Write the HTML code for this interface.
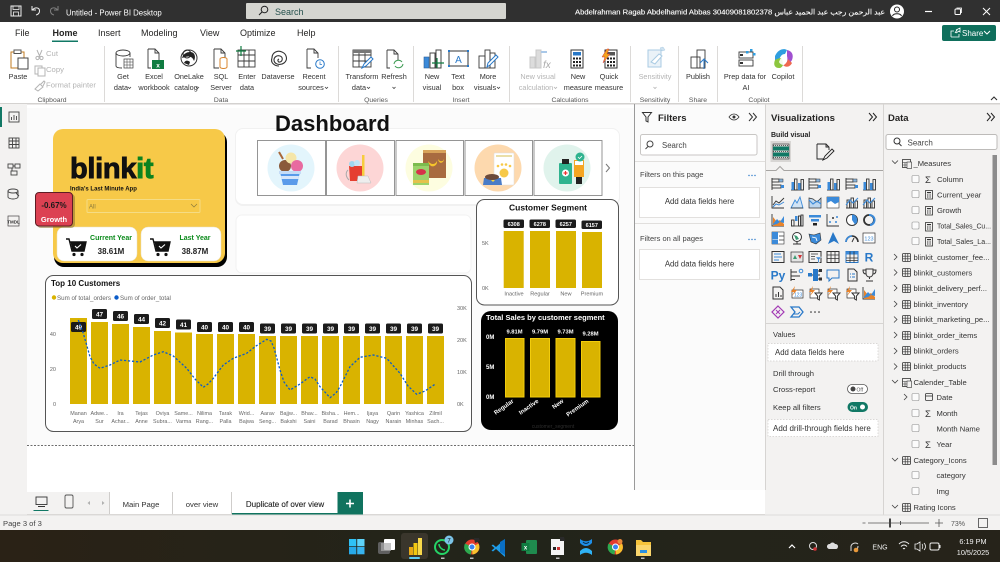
<!DOCTYPE html>
<html lang="en"><head><meta charset="utf-8"><title>Untitled - Power BI Desktop</title>
<style>
html,body{margin:0;padding:0;background:#fff;overflow:hidden;width:1000px;height:562px}
svg{display:block}
text{font-family:"Liberation Sans","Noto Sans CJK SC",sans-serif;white-space:pre}
.r{font-size:7.3px;fill:#333;text-anchor:middle}
.g{font-size:7.3px;fill:#b4b4b4;text-anchor:middle}
.gl{font-size:6.8px;fill:#555;text-anchor:middle}
.m{font-size:9px;fill:#252423}
.d{font-size:7.6px;fill:#333}
.ax{font-size:5.5px;fill:#666}
.xl{font-size:5.4px;fill:#666;text-anchor:middle}
.dl{font-size:6.4px;font-weight:bold;fill:#fff;text-anchor:middle}
.ic{fill:none;stroke:#3a3a3a;stroke-width:.9}
.ch{fill:none;stroke:#444;stroke-width:.8}
</style></head><body>
<svg width="1000" height="562" viewBox="0 0 1000 562" xmlns="http://www.w3.org/2000/svg">
<defs>
<g id="cart"><path d="M0 1h3l3 12h12l2-9H4" fill="none" stroke="#111" stroke-width="1.4"/><path d="M4.500 4h15.500l-2 9H6.500z" fill="#111"/><circle cx="8" cy="16.500" r="1.600" fill="#111"/><circle cx="16" cy="16.500" r="1.600" fill="#111"/><path d="M9 8l2 2 4-3.500" fill="none" stroke="#fff" stroke-width="1.100"/></g>
<g id="tbl"><rect x=".5" y=".5" width="8" height="8" rx="1" fill="none" stroke="#333" stroke-width=".8"/><path d="M.5 3.200h8M.5 5.800h8M3.200.5v8M5.800.5v8" stroke="#333" stroke-width=".7"/></g>
<g id="mt"><rect x=".5" y=".5" width="8" height="8" fill="none" stroke="#333" stroke-width=".8"/><path d="M.5 3.500h8M.5 6h8M3 3.500v5M6 3.500v5" stroke="#333" stroke-width=".6"/><rect x="5" y="3" width="4.500" height="6.500" fill="#f3f2f1" stroke="#333" stroke-width=".6"/></g>
<g id="calc"><rect x=".5" y=".5" width="7" height="8.500" fill="none" stroke="#333" stroke-width=".8"/><rect x="2" y="2" width="4" height="1.200" fill="#333"/><path d="M2 5h4M2 7h4" stroke="#333" stroke-dasharray="1 .6" stroke-width="1"/></g>
<rect id="cb" width="7" height="7" rx="1" fill="#fbfbfb" stroke="#8a8a8a" stroke-width=".6"/>
<g id="sig"><text x="0" y="7.500" font-size="9.500" fill="#333">Σ</text></g>
<g id="hb"><path d="M1 1v12" stroke="#333" stroke-width=".9"/><rect x="1" y="2" width="7" height="3" fill="none" stroke="#333" stroke-width=".9"/><rect x="8" y="2" width="4" height="3" fill="#8ab4dc" stroke="#333" stroke-width=".5"/><rect x="1" y="8" width="9" height="3" fill="none" stroke="#333" stroke-width=".9"/><rect x="10" y="8" width="3" height="3" fill="#3b8ad9"/></g>
<g id="vb"><path d="M1 13h12" stroke="#333" stroke-width=".9"/><rect x="1.500" y="5" width="2.500" height="8" fill="#3b8ad9"/><rect x="4.500" y="2" width="2.500" height="11" fill="none" stroke="#333" stroke-width=".9"/><rect x="8" y="6" width="2.500" height="7" fill="#3b8ad9"/><rect x="11" y="2.500" width="2.500" height="10.500" fill="none" stroke="#333" stroke-width=".9"/></g>
<g id="ln"><path d="M1 1v12h12" fill="none" stroke="#333" stroke-width=".9"/><path d="M2 10l3-4 3 2 5-5" fill="none" stroke="#333" stroke-width=".9"/><path d="M2 12l3-3 3 1 5-3" fill="none" stroke="#3b8ad9" stroke-width="1"/></g>
<g id="mn"><path d="M1 13l4-8 2 3 3-6 3 11z" fill="#d2e4f5" stroke="#3b8ad9" stroke-width=".9"/><path d="M1 13h12" stroke="#333" stroke-width=".8"/></g>
<g id="wv"><path d="M1 3v10h12v-10l-4 4-4-3z" fill="#bcd6ef" stroke="#333" stroke-width=".7"/><path d="M1 5l4 4 4-3 4 3" fill="none" stroke="#3b8ad9" stroke-width="1.100"/></g>
<g id="wv2"><rect x="1" y="2" width="12" height="11" fill="#fff" stroke="#333" stroke-width=".6"/><path d="M1 2h12v5l-4 2-4-3-4 2z" fill="#3b8ad9"/></g>
<g id="cb1"><path d="M1 13h12" stroke="#333" stroke-width=".9"/><rect x="2" y="5" width="2.500" height="8" fill="none" stroke="#333" stroke-width=".9"/><rect x="6" y="3" width="2.500" height="10" fill="none" stroke="#333" stroke-width=".9"/><rect x="10" y="6" width="2.500" height="7" fill="none" stroke="#333" stroke-width=".9"/><path d="M1 10l4-5 3 3 5-5" fill="none" stroke="#3b8ad9" stroke-width="1.100"/></g>
<g id="rb"><path d="M1 1v12h12" fill="none" stroke="#333" stroke-width=".9"/><path d="M2 4l4 5 3-2 4 4v2h-11z" fill="#e8832a"/><path d="M2 11l4-5 3 3 4-6v7l-4-1-3 2-4 1z" fill="#3b8ad9"/></g>
<g id="wf"><path d="M1 13h12" stroke="#333" stroke-width=".8"/><rect x="1.500" y="7" width="2.500" height="6" fill="none" stroke="#333" stroke-width=".9"/><rect x="5" y="3" width="2.500" height="5" fill="#3b8ad9"/><rect x="8.500" y="3" width="2" height="10" fill="none" stroke="#333" stroke-width=".9"/><rect x="11" y="2" width="2" height="11" fill="none" stroke="#333" stroke-width=".9"/></g>
<g id="fn"><rect x="1" y="2" width="12" height="2.500" fill="#3b8ad9"/><rect x="3" y="6" width="8" height="2.500" fill="#3b8ad9"/><rect x="5" y="10" width="4" height="2.500" fill="#222"/></g>
<g id="sc"><path d="M1 1v12h12" fill="none" stroke="#333" stroke-width=".9"/><circle cx="4" cy="9" r="1" fill="#3b8ad9"/><circle cx="7" cy="5" r="1" fill="#333"/><circle cx="10" cy="9" r="1" fill="#3b8ad9"/><circle cx="11" cy="4" r="1" fill="#3b8ad9"/></g>
<g id="pi"><circle cx="7" cy="7" r="5.500" fill="#fff" stroke="#333"/><path d="M7 7V1.500a5.500 5.500 0 0 1 3 10z" fill="#3b8ad9"/></g>
<g id="dn"><circle cx="7" cy="7" r="5" fill="none" stroke="#333" stroke-width="1.800"/><path d="M7 2a5 5 0 0 1 1 10" fill="none" stroke="#3b8ad9" stroke-width="2"/></g>
<g id="tm"><rect x="1" y="1" width="12" height="12" fill="#fff" stroke="#333" stroke-width=".6"/><rect x="1" y="1" width="6" height="7" fill="#3b8ad9"/><rect x="1" y="8.500" width="6" height="4.500" fill="#3b8ad9"/><path d="M8 5h5M8 9h5" stroke="#333" stroke-width=".7"/></g>
<g id="gl"><circle cx="7" cy="6" r="4.500" fill="#fff" stroke="#333"/><path d="M4 4l3 1 2 3-3 1z" fill="#3c9a72"/><path d="M3 13h8M7 10.500V13" stroke="#333"/></g>
<g id="fm"><path d="M1 3l5 1 6-2 1 7-5 4-5-2z" fill="#3b8ad9" stroke="#333" stroke-width=".6"/><path d="M4 6l4 1 1 3" stroke="#fff" fill="none" stroke-width=".9"/></g>
<g id="az"><path d="M7 1l6 12-5-3-6 3z" fill="#2878c8"/></g>
<g id="gg"><path d="M1 11a6 6 0 0 1 12 0" fill="none" stroke="#333" stroke-width="1.600"/><path d="M1 11a6 6 0 0 1 6-6" fill="none" stroke="#3b8ad9" stroke-width="1.600"/><path d="M7 11l2-4" stroke="#333"/></g>
<g id="kd"><rect x="1" y="2" width="12" height="10" fill="#fff" stroke="#333" stroke-width=".7"/><text x="7" y="9.500" font-size="5.500" fill="#3b8ad9" text-anchor="middle">123</text></g>
<g id="mr"><rect x="1" y="1.500" width="12" height="11" fill="none" stroke="#333"/><path d="M3 4h7M3 7h8M3 10h5" stroke="#3b8ad9"/></g>
<g id="kp"><rect x="1" y="2" width="12" height="10" fill="#e4e4e4" stroke="#333" stroke-width=".7"/><path d="M3 9l2-4 2 4z" fill="#3c9a72"/><path d="M8 5l2 4 2-4z" fill="#d13438"/></g>
<g id="sl"><rect x="1" y="1.500" width="12" height="11" fill="none" stroke="#333"/><path d="M3 4h7M3 6.500h4M3 9h4" stroke="#333" stroke-width=".8"/><path d="M7.500 7h6l-2.300 2.500v3.500l-1.400-1v-2.500z" fill="#3b8ad9" stroke="#f3f2f1" stroke-width=".5"/></g>
<g id="tt"><rect x="1" y="1.500" width="12" height="11" fill="none" stroke="#333"/><path d="M1 5h12M1 8.500h12M5 1.500v11M9 1.500v11" stroke="#333" stroke-width=".8"/></g>
<g id="mx"><rect x="1" y="1.500" width="12" height="11" fill="none" stroke="#2878c8"/><rect x="1" y="1.500" width="12" height="3" fill="#3b8ad9"/><path d="M1 8h12M1 10.500h12M5 1.500v11M9 1.500v11" stroke="#333" stroke-width=".8"/></g>
<g id="rr"><text x="7" y="11.500" font-size="12" font-weight="bold" fill="#2878c8" text-anchor="middle">R</text></g>
<g id="py"><text x="7" y="11.500" font-size="12" font-weight="bold" fill="#2878c8" text-anchor="middle">Py</text></g>
<g id="de"><path d="M1 1v12M1 4h6M1 8h9M1 11.500h4" stroke="#333" stroke-width="1"/><circle cx="11" cy="3" r="1.800" fill="none" stroke="#3b8ad9"/></g>
<g id="dt"><rect x="5" y="1" width="5" height="12" fill="#2878c8"/><rect x="0" y="5" width="4" height="3.500" fill="#2878c8"/><path d="M4 7h1M10 3h2M10 11h2M10 7h2" stroke="#333"/><rect x="11" y="1" width="3" height="3" fill="#333"/><rect x="11" y="9.500" width="3" height="3" fill="#333"/></g>
<g id="sp"><path d="M1 2h12v8H6l-3 3v-3H1z" fill="none" stroke="#2878c8" stroke-width="1"/></g>
<g id="pg"><path d="M3 1h6l3 3v9H3z" fill="none" stroke="#333"/><path d="M5 6h1M7 6h3M5 9h1M7 9h3" stroke="#2878c8"/></g>
<g id="tp"><path d="M4 1h7v4c0 3-2 4-3.500 4S4 8 4 5zM4 2H1c0 3 1 4 3 4M11 2h3c0 3-1 4-3 4M7.500 9v2M4 13h7" fill="none" stroke="#333" stroke-width="1"/></g>
<g id="dc"><path d="M2 1h7l3 3v9H2z" fill="none" stroke="#333"/><path d="M5 11V8M7.500 11V6M10 11V9" stroke="#333"/></g>
<g id="spk"><path d="M2 4h11v8H2z" fill="#fff" stroke="#333" stroke-width=".7"/><path d="M5 0L1 6h3l-2 4 5-6H4z" fill="#e8832a"/><text x="8" y="10.500" font-size="5" fill="#3b8ad9" text-anchor="middle">123</text></g>
<g id="spf"><path d="M2 3h9v9H2z" fill="#fff" stroke="#333" stroke-width=".7"/><path d="M5 0L1 6h3l-2 4 5-6H4z" fill="#e8832a"/><path d="M7 7h7l-2.600 3v4l-1.800-1v-3z" fill="#fff" stroke="#333"/></g>
<g id="pur"><path d="M7 1l6 6-6 6-6-6z" fill="none" stroke="#a238b4" stroke-width="1.200"/><path d="M5 5l4 4M9 5l-4 4" stroke="#a238b4"/></g>
<g id="chv"><path d="M1 2h8l4 5-4 5H1l4-5z" fill="none" stroke="#2878c8" stroke-width="1.300"/><path d="M3 9h5l2-2" stroke="#2878c8" fill="none"/></g>
<g id="dots"><circle cx="3" cy="7" r=".8" fill="#222"/><circle cx="7" cy="7" r=".8" fill="#222"/><circle cx="11" cy="7" r=".8" fill="#222"/></g>
<linearGradient id="tb" x1="0" x2="1"><stop offset="0" stop-color="#2a2216"/><stop offset=".5" stop-color="#22241a"/><stop offset="1" stop-color="#26231a"/></linearGradient>
</defs>

<!-- base -->
<rect width="1000" height="562" fill="#f3f2f1"/>
<!-- title bar -->
<rect width="1000" height="22" fill="#303030"/>
<rect x="11" y="6" width="10" height="10" fill="none" stroke="#f0f0f0"/><rect x="13" y="6" width="6" height="3.500" fill="none" stroke="#f0f0f0" stroke-width=".8"/><rect x="13.500" y="12" width="5" height="4" fill="none" stroke="#f0f0f0" stroke-width=".8"/>
<path d="M32 6v4h4M32.500 10c2-3 7-3 7 1 0 2-1.500 3.500-3.500 4" fill="none" stroke="#f0f0f0"/>
<path d="M58 6v4h-4M57.500 10c-2-3-7-3-7 1 0 2 1.500 3.500 3.500 4" fill="none" stroke="#7f7f7f"/>
<text x="66" y="15.500" font-size="7.800" fill="#fff">Untitled - Power BI Desktop</text>
<rect x="246" y="3" width="260" height="16" rx="1" fill="#d5d5d0"/>
<circle cx="264.500" cy="9.500" r="3.300" fill="none" stroke="#222" stroke-width="1"/><path d="M262 12l-3 3" stroke="#222" stroke-width="1.100"/>
<text x="275" y="15" font-size="9" fill="#27524e">Search</text>
<text x="575" y="14.500" font-size="7.300" fill="#fff" stroke="#fff" stroke-width=".12" textLength="310" lengthAdjust="spacingAndGlyphs">Abdelrahman Ragab Abdelhamid Abbas 30409081802378 عبد الرحمن رجب عبد الحميد عباس</text>
<circle cx="897" cy="11.500" r="7" fill="#fff"/><circle cx="897" cy="9.500" r="2.500" fill="none" stroke="#222"/><path d="M892.500 16c1-3 8-3 9 0" fill="none" stroke="#222"/>
<path d="M925 11.500h7" stroke="#fff" stroke-width="1.200"/>
<rect x="955" y="9" width="5.500" height="5.500" rx="1" fill="none" stroke="#fff"/><path d="M956.500 8h5v5" fill="none" stroke="#fff" stroke-width=".8"/>
<path d="M983 8l7 7M990 8l-7 7" stroke="#fff" stroke-width="1"/>

<!-- ribbon -->
<rect y="22" width="1000" height="82" fill="#fff"/>
<rect y="103" width="1000" height="1.500" fill="#d4d2d0"/>
<text x="15" y="36" class="m">File</text>
<text x="52.500" y="36" class="m" font-weight="bold">Home</text>
<rect x="52" y="40.500" width="26" height="1.500" fill="#117865"/>
<text x="98" y="36" class="m">Insert</text>
<text x="141" y="36" class="m">Modeling</text>
<text x="200" y="36" class="m">View</text>
<text x="240" y="36" class="m">Optimize</text>
<text x="297" y="36" class="m">Help</text>
<rect x="942" y="25" width="54" height="16" rx="2" fill="#0f6f5c"/>
<path d="M951 37h8v-3M951 37v-6h3M955 33l2-3h-1l4-2 0 4-1-1-3 2" fill="none" stroke="#fff" stroke-width=".8"/>
<text x="962" y="36" font-size="8" fill="#fff">Share</text>
<path d="M984 31l3 3 3-3" fill="none" stroke="#fff"/>
<path d="M991 100l3-3 3 3" fill="none" stroke="#333" stroke-width="1.100"/>
<!-- separators -->
<g stroke="#dcdad8"><path d="M104.500 46v56M338.500 46v56M413.500 46v56M509.500 46v56M630.500 46v56M678.500 46v56M717.500 46v56M802.500 46v56"/></g>
<!-- ribbon icons -->
<rect x="11" y="52" width="13" height="16" fill="#fff" stroke="#c27b20"/><rect x="14" y="50" width="7" height="3.500" fill="#fff" stroke="#555"/><rect x="18" y="58" width="10" height="11" fill="#fff" stroke="#444"/>
<path d="M37 50l3 7M42 50l-3 7" stroke="#b4b4b4"/><circle cx="37.500" cy="58" r="1.600" fill="none" stroke="#b4b4b4"/><circle cx="41.500" cy="58" r="1.600" fill="none" stroke="#b4b4b4"/>
<rect x="35" y="66" width="7" height="8" fill="none" stroke="#b4b4b4"/><rect x="38" y="68" width="7" height="8" fill="#fff" stroke="#b4b4b4"/>
<path d="M35 89l5-5 3 3-5 4zM41 84l3-3 1 1-2 4" fill="none" stroke="#b4b4b4"/>
<g class="ic"><path d="M116 53v13c0 1.500 3 2 6 2M130 53v4"/><ellipse cx="123" cy="53" rx="7" ry="3"/><rect x="124" y="59" width="9" height="9" stroke-width=".7"/><path d="M124 62h9M124 65h9M127 59v9M130 59v9" stroke-width=".5"/></g>
<g class="ic"><path d="M148 49h7l4 4v7M148 49v19h3"/><path d="M155 49v4h4"/></g><rect x="152" y="60" width="12" height="9" fill="#107c41"/><text x="158" y="67.500" font-size="6.500" font-weight="bold" fill="#fff" text-anchor="middle">x</text>
<circle cx="189" cy="58" r="8" fill="#fff" stroke="#333"/><path d="M182 58a8 8 0 0 1 8-6c5 0 6 5 4 9-2-6-7-5-12-3zM184 63c1-3 4-3 6-1l-1 3z" fill="#222"/><circle cx="187" cy="54" r="4" fill="none" stroke="#222"/>
<g class="ic"><path d="M214 49h7l4 4v7M214 49v19h5"/><path d="M221 49v4h4"/></g><path d="M220 59a3.500 1.500 0 0 1 7 0v8a3.500 1.500 0 0 1-7 0z" fill="#fff" stroke="#d8842c"/>
<g class="ic"><rect x="238" y="50" width="17" height="17"/><path d="M238 55h17M238 61h17M244 50v17M249 50v17"/></g><path d="M241 46v10M236 51h10" stroke="#107c41" stroke-width="1.200"/>
<g fill="none" stroke="#333" stroke-width="1.100"><path d="M272 58c0-6 6-8 10-6 5 2 6 8 2 11-4 3-10 1-10-3 0-3 3-5 6-4 3 1 3 5 0 6-2 .5-3-2-1-3"/><path d="M272 58c-2 5 3 8 7 8"/></g>
<g class="ic"><path d="M307 49h7l4 4v5M307 49v19h4"/><path d="M314 49v4h4"/></g><circle cx="320" cy="64" r="4.300" fill="#fff" stroke="#2878c8"/><path d="M320 61.500v3h2" fill="none" stroke="#2878c8" stroke-width=".7"/>
<g class="ic"><rect x="353" y="50" width="18" height="17"/><path d="M353 55h18M353 61h18M359 50v17M365 50v17"/></g><rect x="353" y="50" width="18" height="3" fill="#777"/><path d="M362 68l2-4 7-7 2 2-7 7z" fill="#fff" stroke="#2878c8"/>
<g class="ic"><path d="M387 50h7l4 4v6M387 50v18h3"/><path d="M394 50v4h4"/></g><path d="M394 64a4.500 4.500 0 0 1 8-2M403 64a4.500 4.500 0 0 1-8 2" fill="none" stroke="#3c9a52"/>
<rect x="424" y="57" width="5" height="11" fill="#3b8ad9" stroke="#2a5f9a" stroke-width=".6"/><rect x="430" y="53" width="5" height="15" fill="#fff" stroke="#444"/><rect x="436" y="50" width="5" height="18" fill="#fff" stroke="#444"/><path d="M437 58v10M432 63h12" stroke="#107c41" stroke-width="1.200"/>
<rect x="449" y="51" width="19" height="15" fill="#fff" stroke="#333"/><g fill="#2878c8"><rect x="448" y="50" width="2" height="2"/><rect x="467" y="50" width="2" height="2"/><rect x="448" y="65" width="2" height="2"/><rect x="467" y="65" width="2" height="2"/></g><text x="458.500" y="63" font-size="10" fill="#2878c8" text-anchor="middle">A</text>
<g class="ic"><rect x="479" y="56" width="6" height="12"/><rect x="485" y="50" width="5" height="18"/><rect x="490" y="53" width="5" height="15"/></g><path d="M487 67l1-4 8-8 2 2-8 8z" fill="#fff" stroke="#2878c8"/>
<g stroke="#c8c8c8" fill="#dcdcdc"><rect x="530" y="57" width="5" height="11"/><rect x="536" y="50" width="5" height="18"/></g><path d="M541 52h6" stroke="#a9c8e8" stroke-width="2"/><text x="543" y="68" font-size="10" font-style="italic" fill="#aaa" font-family="Liberation Serif">fx</text>
<rect x="571" y="50" width="12" height="18" fill="none" stroke="#333"/><rect x="573" y="52" width="8" height="3.500" fill="#2878c8"/><g fill="#222"><rect x="573" y="57.500" width="2" height="2"/><rect x="576" y="57.500" width="2" height="2"/><rect x="579" y="57.500" width="2" height="2"/><rect x="573" y="61" width="2" height="2"/><rect x="576" y="61" width="2" height="2"/><rect x="579" y="61" width="2" height="2"/><rect x="573" y="64.500" width="2" height="2"/><rect x="576" y="64.500" width="2" height="2"/><rect x="579" y="64.500" width="2" height="2"/></g>
<rect x="605" y="50" width="12" height="18" fill="none" stroke="#333"/><rect x="607" y="52" width="8" height="3.500" fill="#555"/><g fill="#222"><rect x="607" y="57.500" width="2" height="2"/><rect x="610" y="57.500" width="2" height="2"/><rect x="613" y="57.500" width="2" height="2"/><rect x="607" y="61" width="2" height="2"/><rect x="610" y="61" width="2" height="2"/><rect x="613" y="61" width="2" height="2"/><rect x="607" y="64.500" width="2" height="2"/><rect x="610" y="64.500" width="2" height="2"/><rect x="613" y="64.500" width="2" height="2"/></g><path d="M607 49l-5 8h3l-2 6 7-9h-3l2-5z" fill="#f2a41d" stroke="#d13438" stroke-width=".5"/>
<rect x="648" y="50" width="13" height="17" fill="#eaf2f8" stroke="#a9cbe3"/><path d="M651 62l8-8 3 2-7 8z" fill="#fff" stroke="#a9cbe3"/><path d="M660 48l3-1 2 3-3 1z" fill="#cfe2f0" stroke="#a9cbe3" stroke-width=".5"/>
<g class="ic"><rect x="691" y="57" width="9" height="11"/><rect x="697" y="50" width="8" height="18"/></g><path d="M704 69v-9M700 63l4-4 4 4" fill="none" stroke="#2878c8"/>
<g class="ic"><rect x="739" y="52" width="14" height="6"/><rect x="739" y="60" width="14" height="6"/></g><rect x="740" y="54" width="3" height="2" fill="#333"/><rect x="740" y="62" width="3" height="2" fill="#333"/><g fill="#2f9ee0"><rect x="746" y="51" width="2.500" height="2.500"/><rect x="750" y="49" width="2.500" height="2.500"/><rect x="753" y="53" width="2.500" height="2.500"/></g>
<path d="M775 56c3-7 9-8 12-6l-2 4c-3 0-5 2-6 7-1 3-4 4-4 1z" fill="#2f9ee0"/><path d="M787 50c5 1 7 5 5 10l-4 6-4-1c3-1 4-5 3-9z" fill="#a04fd0"/><path d="M775 60c-2 5 0 8 4 8 2 0 3-1 4-3 0-4-1-5-1-7-3 0-5 1-7 2z" fill="#8dc63f"/><path d="M783 65c3 3 7 2 9-2l-4-4c-1 3-2 5-5 6z" fill="#ef6950"/><path d="M779 62c1-3 3-6 7-8 2 4 1 8-2 11-2 0-4-1-5-3z" fill="#fff" opacity=".9"/>
<!-- ribbon text -->
<text x="18" y="79" class="r">Paste</text>
<text x="46" y="56" class="g" style="text-anchor:start;font-size:7.700px">Cut</text><text x="46" y="72" class="g" style="text-anchor:start;font-size:7.700px">Copy</text><text x="46" y="87.500" class="g" style="text-anchor:start;font-size:7.700px">Format painter</text>
<text x="52" y="102" class="gl">Clipboard</text>
<text x="123" y="79" class="r">Get</text><text x="121" y="90" class="r">data</text>
<text x="154" y="79" class="r">Excel</text><text x="154" y="90" class="r">workbook</text>
<text x="189" y="79" class="r">OneLake</text><text x="186" y="90" class="r">catalog</text>
<text x="221" y="79" class="r">SQL</text><text x="221" y="90" class="r">Server</text>
<text x="247" y="79" class="r">Enter</text><text x="247" y="90" class="r">data</text>
<text x="278" y="79" class="r">Dataverse</text>
<text x="314" y="79" class="r">Recent</text><text x="311" y="90" class="r">sources</text>
<text x="221" y="102" class="gl">Data</text>
<text x="362" y="79" class="r">Transform</text><text x="359" y="90" class="r">data</text>
<text x="394" y="79" class="r">Refresh</text>
<text x="376" y="102" class="gl">Queries</text>
<text x="432" y="79" class="r">New</text><text x="432" y="90" class="r">visual</text>
<text x="458" y="79" class="r">Text</text><text x="458" y="90" class="r">box</text>
<text x="488" y="79" class="r">More</text><text x="485" y="90" class="r">visuals</text>
<text x="461" y="102" class="gl">Insert</text>
<text x="538" y="79" class="g">New visual</text><text x="536" y="90" class="g">calculation</text>
<text x="578" y="79" class="r">New</text><text x="578" y="90" class="r">measure</text>
<text x="609" y="79" class="r">Quick</text><text x="609" y="90" class="r">measure</text>
<text x="570" y="102" class="gl">Calculations</text>
<text x="655" y="79" class="g">Sensitivity</text>
<text x="655" y="102" class="gl">Sensitivity</text>
<text x="698" y="79" class="r">Publish</text><text x="698" y="102" class="gl">Share</text>
<text x="745" y="79" class="r">Prep data for</text><text x="746" y="90" class="r">AI</text>
<text x="783" y="79" class="r">Copilot</text><text x="759" y="102" class="gl">Copilot</text>
<g class="ch" stroke="#444"><path d="M128 87l1.500 1.500 1.500-1.500M196 87l1.500 1.500 1.500-1.500M325 87l1.500 1.500 1.500-1.500M367 87l1.500 1.500 1.500-1.500M392.500 87l1.500 1.500 1.500-1.500M497 87l1.500 1.500 1.500-1.500"/></g>
<path d="M554 87l1.500 1.500 1.500-1.500M653.500 87l1.500 1.500 1.500-1.500" class="ch" style="stroke:#b4b4b4"/>

<!-- left rail -->
<rect y="104" width="27" height="426" fill="#f3f2f1"/>
<rect x="0" y="107" width="2" height="20" fill="#117865"/>
<g fill="none" stroke="#444" stroke-width=".9">
<rect x="9" y="112" width="10" height="10"/><path d="M11.500 120v-3M14 120v-5M16.500 120v-4"/>
<rect x="9" y="138" width="10" height="10"/><path d="M9 141h10M9 144.500h10M12.500 138v10M16 138v10"/>
<rect x="8" y="164" width="5" height="4"/><rect x="15" y="164" width="5" height="4"/><rect x="11" y="171" width="6" height="4"/><path d="M13 166h2M12 168v3"/>
<ellipse cx="13" cy="191" rx="5" ry="2"/><path d="M8 191v6c0 1 2.500 2 5 2s5-1 5-2v-6"/>
</g>
<path d="M16 193l3 3" stroke="#444"/>
<rect x="8" y="216" width="11" height="10" fill="none" stroke="#444" stroke-width=".7"/>
<text x="13.500" y="223.500" font-size="4.500" fill="#333" text-anchor="middle" font-weight="bold">TMDL</text>

<!-- canvas -->
<rect x="27" y="104.500" width="607" height="388" fill="#fff"/>
<rect x="27" y="108" width="607" height="337" fill="#fbfbfb"/>
<path d="M27 445.500h607" stroke="#6d6d6d" stroke-width="1" stroke-dasharray="2 1.500"/>

<!-- slicer panel -->
<rect x="235" y="128" width="385" height="78" rx="8" fill="#f1f1f1"/>
<rect x="236" y="129" width="383" height="75" rx="7" fill="#fff"/>
<rect x="236" y="215" width="235" height="58" rx="6" fill="#fff" stroke="#f2f2f2"/>
<text x="275" y="131" font-size="22" font-weight="bold" fill="#111" textLength="115" lengthAdjust="spacingAndGlyphs">Dashboard</text>
<g fill="#fff" stroke="#8a8a8a" stroke-width=".9">
<rect x="257.500" y="140.500" width="68" height="55"/><rect x="326.500" y="140.500" width="68" height="55"/><rect x="396" y="140.500" width="67.500" height="55"/><rect x="465" y="140.500" width="67.500" height="55"/><rect x="534" y="140.500" width="68" height="55"/></g>
<circle cx="291" cy="168" r="23.500" fill="#e3f5fc"/><circle cx="360" cy="168" r="23.500" fill="#fdd6d6"/><circle cx="429" cy="168" r="23.500" fill="#fdfde0"/><circle cx="498" cy="168" r="23.500" fill="#fdd9ae"/><circle cx="567" cy="168" r="23.500" fill="#e0f3ec"/>
<!-- ice cream -->
<path d="M280 172h20l-3 13h-14z" fill="#5a9bea"/><path d="M281 176h18l-.5 3h-17z" fill="#d7e6fa"/><circle cx="285" cy="166" r="6" fill="#8a5a3a"/><circle cx="291" cy="158" r="5.500" fill="#f5e6a8"/><circle cx="297" cy="166" r="6" fill="#e86aa0"/><path d="M279 152l4 7" stroke="#a8683a" stroke-width="2"/><rect x="279" y="171" width="22" height="3" fill="#c5dcf7"/>
<!-- mop -->
<path d="M349 166h14l-1 15h-12z" fill="#e53f30"/><rect x="362" y="155" width="2.500" height="21" fill="#f7cd3c"/><path d="M358 176h10l3 7h-14z" fill="#eee" stroke="#bbb" stroke-width=".5"/><circle cx="352" cy="164" r="3" fill="#9fd7ef"/><circle cx="357" cy="163" r="3" fill="#bfe5f5"/><path d="M348 170c-3 3-2 7 1 10" fill="none" stroke="#aaa"/>
<!-- snack -->
<rect x="423" y="152" width="23" height="26" fill="#a86b40"/><rect x="423" y="150" width="23" height="3" fill="#d8a35a"/><path d="M428 161c3 4 7 4 9 0 1 5-7 9-9 0zM438 159c2 3 5 3 6 0 0 4-5 6-6 0z" fill="#f6c42b"/><rect x="413" y="165" width="16" height="20" fill="#9bd36c"/><rect x="413" y="163" width="16" height="3" fill="#7cbc4f"/><ellipse cx="421" cy="172" rx="5" ry="3" fill="#d6334a"/><rect x="413" y="180" width="16" height="3" fill="#e4c24c"/>
<!-- pet -->
<rect x="494" y="153" width="20" height="32" rx="1" fill="#fff" stroke="#ddd" stroke-width=".5"/><rect x="496" y="155" width="16" height="2" fill="#eadfa8"/><circle cx="504" cy="173" r="4.500" fill="#f7c948"/><circle cx="498" cy="166" r="1.300" fill="#f7c948"/><circle cx="502" cy="164.500" r="1.300" fill="#f7c948"/><circle cx="506" cy="164.500" r="1.300" fill="#f7c948"/><circle cx="510" cy="166" r="1.300" fill="#f7c948"/><path d="M484 178h17l1 7h-19z" fill="#4a7cc7"/><ellipse cx="492" cy="177" rx="7" ry="3" fill="#6d4a3a"/><path d="M491 180l2 2 2-2z" fill="#f7d33c"/>
<!-- health -->
<rect x="559" y="163" width="13" height="21" rx="1" fill="#2fb38f"/><rect x="562" y="159" width="7" height="5" fill="#222"/><circle cx="565.500" cy="173" r="3.500" fill="#fff"/><path d="M565.500 171v4M563.500 173h4" stroke="#e33" stroke-width="1.200"/><rect x="574" y="160" width="10" height="17" fill="#f5a623"/><rect x="575" y="161" width="8" height="4" fill="#fff"/><rect x="576" y="177" width="6" height="7" fill="#222"/><circle cx="580" cy="157" r="4.500" fill="#2fb38f"/><path d="M578 157l1.500 1.500 2.500-2.500" stroke="#fff" fill="none" stroke-width=".8"/>
<path d="M606 164l3.500 4-3.500 4" fill="none" stroke="#777"/>

<!-- blinkit card -->
<rect x="54" y="132" width="173" height="135" rx="10" fill="#000"/>
<rect x="53" y="129" width="172" height="134" rx="10" fill="#f7c948"/>
<text x="70" y="178" font-size="29" font-weight="bold" letter-spacing="-.3" fill="#111" stroke="#111" stroke-width=".9">blink<tspan fill="#0c831f" stroke="#0c831f">it</tspan></text>
<text x="70" y="190.500" font-size="6" font-weight="bold" fill="#111">India's Last Minute App</text>
<rect x="87" y="199.500" width="113" height="13" rx="1" fill="#f7c948" stroke="#f5dc84"/>
<text x="89" y="208.500" font-size="6" fill="#8a7a3c">All</text>
<path d="M191 204l3 3 3-3" fill="none" stroke="#8a7a3c" stroke-width=".7"/>
<rect x="57" y="227" width="80" height="34" rx="7" fill="#fff" stroke="#e7e0c6" stroke-width=".5"/>
<rect x="141" y="227" width="80" height="34" rx="7" fill="#fff" stroke="#e7e0c6" stroke-width=".5"/>
<use href="#cart" x="66" y="238"/><use href="#cart" x="150" y="238"/>
<text x="111" y="240" font-size="7" font-weight="bold" fill="#0a8a1a" text-anchor="middle">Current Year</text>
<text x="111" y="254" font-size="8" font-weight="bold" fill="#222" text-anchor="middle">38.61M</text>
<text x="195" y="240" font-size="7" font-weight="bold" fill="#0a8a1a" text-anchor="middle">Last Year</text>
<text x="195" y="254" font-size="8" font-weight="bold" fill="#222" text-anchor="middle">38.87M</text>
<rect x="37" y="194" width="38" height="34" rx="4" fill="#8a7130" opacity=".55"/>
<rect x="35.500" y="192.500" width="37" height="33.500" rx="3.500" fill="#dc4152" stroke="#5e1c24"/>
<text x="54" y="208" font-size="8" font-weight="bold" fill="#1a1a1a" text-anchor="middle">-0.67%</text>
<text x="54" y="222" font-size="7.500" font-weight="bold" fill="#fff" text-anchor="middle">Growth</text>

<!-- Top 10 -->
<rect x="45.500" y="275.500" width="426" height="156" rx="8" fill="#fff" stroke="#555"/>
<text x="51" y="286" font-size="8" font-weight="bold" fill="#111">Top 10 Customers</text>
<circle cx="54" cy="297.500" r="2.200" fill="#d9b300"/><text x="57" y="300" font-size="6.200" fill="#666">Sum of total_orders</text>
<circle cx="116.500" cy="297.500" r="2.200" fill="#0b5cc9"/><text x="120" y="300" font-size="6.200" fill="#666">Sum of order_total</text>
<g fill="#d9b300">
<rect x="70" y="318" width="17" height="86"/><rect x="91" y="322" width="17" height="82"/><rect x="112" y="324" width="17" height="80"/><rect x="133" y="327" width="17" height="77"/><rect x="154" y="331" width="17" height="73"/><rect x="175" y="332.500" width="17" height="71.500"/><rect x="196" y="334" width="17" height="70"/><rect x="217" y="334" width="17" height="70"/><rect x="238" y="334" width="17" height="70"/><rect x="259" y="336" width="17" height="68"/><rect x="280" y="336" width="17" height="68"/><rect x="301" y="336" width="17" height="68"/><rect x="322" y="336" width="17" height="68"/><rect x="343" y="336" width="17" height="68"/><rect x="364" y="336" width="17" height="68"/><rect x="385" y="336" width="17" height="68"/><rect x="406" y="336" width="17" height="68"/><rect x="427" y="336" width="17" height="68"/>
</g>
<g fill="#1b1b1b">
<rect x="71" y="322" width="15" height="10" rx="1.500"/><rect x="92" y="309" width="15" height="10" rx="1.500"/><rect x="113" y="311" width="15" height="10" rx="1.500"/><rect x="134" y="314" width="15" height="10" rx="1.500"/><rect x="155" y="318" width="15" height="10" rx="1.500"/><rect x="176" y="319.500" width="15" height="10" rx="1.500"/><rect x="197" y="322" width="15" height="10" rx="1.500"/><rect x="218" y="322" width="15" height="10" rx="1.500"/><rect x="239" y="322" width="15" height="10" rx="1.500"/><rect x="260" y="323.500" width="15" height="10" rx="1.500"/><rect x="281" y="323.500" width="15" height="10" rx="1.500"/><rect x="302" y="323.500" width="15" height="10" rx="1.500"/><rect x="323" y="323.500" width="15" height="10" rx="1.500"/><rect x="344" y="323.500" width="15" height="10" rx="1.500"/><rect x="365" y="323.500" width="15" height="10" rx="1.500"/><rect x="386" y="323.500" width="15" height="10" rx="1.500"/><rect x="407" y="323.500" width="15" height="10" rx="1.500"/><rect x="428" y="323.500" width="15" height="10" rx="1.500"/>
</g>
<text x="78.500" y="329.500" class="dl">49</text><text x="99.500" y="316.500" class="dl">47</text><text x="120.500" y="318.500" class="dl">46</text><text x="141.500" y="321.500" class="dl">44</text><text x="162.500" y="325.500" class="dl">42</text><text x="183.500" y="327" class="dl">41</text><text x="204.500" y="329.500" class="dl">40</text><text x="225.500" y="329.500" class="dl">40</text><text x="246.500" y="329.500" class="dl">40</text><text x="267.500" y="331" class="dl">39</text><text x="288.500" y="331" class="dl">39</text><text x="309.500" y="331" class="dl">39</text><text x="330.500" y="331" class="dl">39</text><text x="351.500" y="331" class="dl">39</text><text x="372.500" y="331" class="dl">39</text><text x="393.500" y="331" class="dl">39</text><text x="414.500" y="331" class="dl">39</text><text x="435.500" y="331" class="dl">39</text>
<polyline fill="none" stroke="#0b5cc9" stroke-width="1.300" stroke-dasharray="2.200 1.800" stroke-linejoin="round" points="78.300,320 83.300,333.300 90,356.700 94,364 100,368.300 110,365 120,360 130,361 140,362 153.300,355 163.300,351.700 173.300,356 186.700,368.300 195,379 203.300,387.300 208,384 213.300,378.300 223.300,365 233.300,358.300 246.700,353.300 256,346 266.700,339.300 271,341 274,348 280,370 284,382 290,390 300,384 310,376.700 315,379 320,386.700 330,397.700 336,393 340,386.700 350,366.700 360,357.300 373.300,355 386.700,358.300 400,373.300 408,386 416.700,394.300 425,391 435,384.300"/>
<g class="ax" text-anchor="end"><text x="56" y="336">40</text><text x="56" y="371">20</text><text x="56" y="406">0</text></g>
<g class="ax"><text x="457" y="310">30K</text><text x="457" y="342">20K</text><text x="457" y="374">10K</text><text x="457" y="406">0K</text></g>
<g class="xl">
<text x="78.500" y="415">Manan</text><text x="78.500" y="423">Arya</text><text x="99.500" y="415">Adwe...</text><text x="99.500" y="423">Sur</text><text x="120.500" y="415">Ira</text><text x="120.500" y="423">Achar...</text><text x="141.500" y="415">Tejas</text><text x="141.500" y="423">Anne</text><text x="162.500" y="415">Oviya</text><text x="162.500" y="423">Subra...</text><text x="183.500" y="415">Same...</text><text x="183.500" y="423">Varma</text><text x="204.500" y="415">Nilima</text><text x="204.500" y="423">Rang...</text><text x="225.500" y="415">Tarak</text><text x="225.500" y="423">Palla</text><text x="246.500" y="415">Wrid...</text><text x="246.500" y="423">Bajwa</text><text x="267.500" y="415">Aarav</text><text x="267.500" y="423">Seng...</text><text x="288.500" y="415">Bajjw...</text><text x="288.500" y="423">Bakshi</text><text x="309.500" y="415">Bhav...</text><text x="309.500" y="423">Saini</text><text x="330.500" y="415">Bisha...</text><text x="330.500" y="423">Barad</text><text x="351.500" y="415">Hem...</text><text x="351.500" y="423">Bhasin</text><text x="372.500" y="415">Ijaya</text><text x="372.500" y="423">Nagy</text><text x="393.500" y="415">Qarin</text><text x="393.500" y="423">Narain</text><text x="414.500" y="415">Yashica</text><text x="414.500" y="423">Minhas</text><text x="435.500" y="415">Zilmil</text><text x="435.500" y="423">Sach...</text>
</g>

<!-- Customer Segment -->
<rect x="476.500" y="199.500" width="142" height="105.500" rx="8" fill="#fff" stroke="#555"/>
<text x="548" y="210.500" font-size="8.500" font-weight="bold" fill="#111" text-anchor="middle">Customer Segment</text>
<g fill="#d9b300"><rect x="503.700" y="231" width="20" height="57"/><rect x="530" y="231" width="20" height="57"/><rect x="556" y="231" width="20" height="57"/><rect x="582" y="232" width="20" height="56"/></g>
<g fill="#1b1b1b"><rect x="503.500" y="219.500" width="20.500" height="8.500" rx="1.500"/><rect x="529.500" y="219.500" width="20.500" height="8.500" rx="1.500"/><rect x="555.500" y="219.500" width="20.500" height="8.500" rx="1.500"/><rect x="581.500" y="220.500" width="20.500" height="8.500" rx="1.500"/></g>
<g class="dl" style="font-size:5.500px"><text x="513.700" y="226">6308</text><text x="539.800" y="226">6278</text><text x="565.800" y="226">6257</text><text x="591.800" y="227">6157</text></g>
<g class="ax"><text x="482" y="245">5K</text><text x="482" y="290">0K</text></g>
<g class="xl" style="font-size:5.600px"><text x="514" y="295.500">Inactive</text><text x="540" y="295.500">Regular</text><text x="566" y="295.500">New</text><text x="592" y="295.500">Premium</text></g>

<!-- Total sales -->
<rect x="481" y="311" width="137" height="119" rx="10" fill="#000"/>
<text x="486" y="320" font-size="7.500" font-weight="bold" fill="#fff">Total Sales by customer segment</text>
<g fill="#d9b300" stroke="#f2cc0c"><rect x="505.500" y="338.500" width="18.500" height="58.500"/><rect x="530.500" y="338.500" width="19" height="58.500"/><rect x="556" y="338.500" width="19" height="58.500"/><rect x="581.500" y="341.500" width="18.500" height="55.500"/></g>
<g font-size="5.800" font-weight="bold" fill="#fff" text-anchor="middle"><text x="514.500" y="333.500">9.81M</text><text x="540" y="333.500">9.79M</text><text x="565.500" y="333.500">9.73M</text><text x="590.500" y="335.500">9.28M</text></g>
<g font-size="6" font-weight="bold" fill="#fff"><text x="486" y="339">0M</text><text x="486" y="369">5M</text><text x="486" y="399">0M</text></g>
<g font-size="6" font-weight="bold" fill="#fff" text-anchor="end"><text transform="translate(514,402) rotate(-35)">Regular</text><text transform="translate(539,402) rotate(-35)">Inactive</text><text transform="translate(564,402) rotate(-35)">New</text><text transform="translate(589,402) rotate(-35)">Premium</text></g>
<text x="553" y="428" font-size="5" fill="#2c2c2c" text-anchor="middle">customer_segment</text>

<!-- filters -->
<rect x="634" y="104.500" width="131" height="426" fill="#fbfbfb"/>
<path d="M634.500 104v386" stroke="#9a9a9a"/>
<path d="M642.500 112.500h9l-3.500 4.500v5l-2-1v-4z" fill="none" stroke="#333"/>
<text x="658" y="121" font-size="9.500" font-weight="bold" fill="#252423">Filters</text>
<path d="M729 117c3-4 7-4 10 0-3 4-7 4-10 0z" fill="none" stroke="#333" stroke-width=".8"/><circle cx="734" cy="117" r="1.500" fill="#333"/>
<path d="M749 113l3.500 4-3.500 4M753 113l3.500 4-3.500 4" fill="none" stroke="#333"/>
<rect x="640.500" y="134.500" width="116.500" height="20.500" rx="2" fill="#fff" stroke="#c8c6c4"/>
<circle cx="650" cy="144" r="3" fill="none" stroke="#444"/><path d="M648 146.500l-2.500 2.500" stroke="#444"/>
<text x="662" y="148" font-size="7.800" fill="#444">Search</text>
<path d="M635 161.500h130M635 223.500h130" stroke="#e1dfdd"/>
<text x="640" y="177" font-size="7.500" fill="#444">Filters on this page</text>
<text x="640" y="241" font-size="7.500" fill="#444">Filters on all pages</text>
<g fill="#2878c8"><circle cx="749" cy="175.500" r=".7"/><circle cx="752" cy="175.500" r=".7"/><circle cx="755" cy="175.500" r=".7"/><circle cx="749" cy="239.500" r=".7"/><circle cx="752" cy="239.500" r=".7"/><circle cx="755" cy="239.500" r=".7"/></g>
<rect x="639.500" y="187.500" width="120" height="30" fill="#fff" stroke="#e2e0de"/><rect x="639.500" y="249.500" width="120" height="30" fill="#fff" stroke="#e2e0de"/>
<text x="699.500" y="204" font-size="7.800" fill="#333" text-anchor="middle">Add data fields here</text>
<text x="699.500" y="266.500" font-size="7.800" fill="#333" text-anchor="middle">Add data fields here</text>

<!-- viz -->
<rect x="765" y="104.500" width="118" height="426" fill="#f3f2f1"/>
<path d="M765.500 104v386M883.500 104v411" stroke="#d6d4d2"/>
<text x="771" y="121" font-size="9.500" font-weight="bold" fill="#252423" textLength="64" lengthAdjust="spacingAndGlyphs">Visualizations</text>
<path d="M869 113l3.500 4-3.500 4M873 113l3.500 4-3.500 4" fill="none" stroke="#222"/>
<text x="771" y="137" font-size="7" font-weight="bold" fill="#222">Build visual</text>
<rect x="770.500" y="141" width="20.500" height="21" fill="#d8d6d4"/>
<rect x="773" y="144" width="16" height="15" fill="none" stroke="#333" stroke-width=".6"/><rect x="773" y="146.500" width="16" height="4" fill="#117865"/><rect x="773" y="152.500" width="16" height="4" fill="#117865"/><path d="M773 145.500h16M773 151.500h16M773 157.500h16" stroke="#333" stroke-dasharray="1 1" stroke-width=".7"/>
<path d="M817 144h9l3 3v3M817 144v15h8M826 144v3h3" fill="none" stroke="#222" stroke-width=".9"/><path d="M823 160l2-4 7-7 2 2-7 7z" fill="#f3f2f1" stroke="#222" stroke-width=".9"/>
<path d="M766 170.500h10l4-4 4 4h99" fill="none" stroke="#a6a4a2"/>
<!-- viz grid -->
<use href="#hb" x="771" y="177"/><use href="#vb" x="790" y="177"/><use href="#hb" x="808" y="177"/><use href="#vb" x="826" y="177"/><use href="#hb" x="845" y="177"/><use href="#vb" x="862" y="177"/>
<use href="#ln" x="771" y="195"/><use href="#mn" x="790" y="195"/><use href="#wv" x="808" y="195"/><use href="#wv2" x="826" y="195"/><use href="#cb1" x="845" y="195"/><use href="#cb1" x="862" y="195"/>
<use href="#rb" x="771" y="213"/><use href="#wf" x="790" y="213"/><use href="#fn" x="808" y="213"/><use href="#sc" x="826" y="213"/><use href="#pi" x="845" y="213"/><use href="#dn" x="862" y="213"/>
<use href="#tm" x="771" y="231"/><use href="#gl" x="790" y="231"/><use href="#fm" x="808" y="231"/><use href="#az" x="826" y="231"/><use href="#gg" x="845" y="231"/><use href="#kd" x="862" y="231"/>
<use href="#mr" x="771" y="250"/><use href="#kp" x="790" y="250"/><use href="#sl" x="808" y="250"/><use href="#tt" x="826" y="250"/><use href="#mx" x="845" y="250"/><use href="#rr" x="862" y="250"/>
<use href="#py" x="771" y="268"/><use href="#de" x="790" y="268"/><use href="#dt" x="808" y="268"/><use href="#sp" x="826" y="268"/><use href="#pg" x="845" y="268"/><use href="#tp" x="862" y="268"/>
<use href="#dc" x="771" y="286"/><use href="#spk" x="790" y="286"/><use href="#spf" x="808" y="286"/><use href="#spf" x="826" y="286"/><use href="#spf" x="845" y="286"/><use href="#rb" x="862" y="286"/>
<use href="#pur" x="771" y="305"/><use href="#chv" x="790" y="305"/><use href="#dots" x="808" y="305"/>
<path d="M766 323.500h117" stroke="#d6d4d2"/>
<text x="773" y="337" class="d" style="font-size:7.500px">Values</text>
<rect x="768" y="343.500" width="110" height="17.500" fill="#fff" stroke="#d0cecc" stroke-width=".7" stroke-dasharray="1.500 1.500"/>
<text x="775" y="355" class="d" style="font-size:7.800px">Add data fields here</text>
<text x="773" y="376" class="d" style="font-weight:500">Drill through</text>
<text x="773" y="392" class="d">Cross-report</text>
<text x="773" y="410" class="d">Keep all filters</text>
<rect x="847.500" y="384.500" width="20" height="9" rx="4.500" fill="#fff" stroke="#555" stroke-width=".8"/><circle cx="853" cy="389" r="2.500" fill="#444"/><text x="856.500" y="391.500" font-size="5" fill="#555">Off</text>
<rect x="847.500" y="402" width="20.500" height="10" rx="5" fill="#117865"/><circle cx="862.500" cy="407" r="2.500" fill="#fff"/><text x="850" y="409.500" font-size="5" fill="#fff" font-weight="bold">On</text>
<rect x="768" y="419.500" width="110" height="17" fill="#fff" stroke="#d0cecc" stroke-width=".7" stroke-dasharray="1.500 1.500"/>
<text x="773" y="431" class="d" style="font-size:8px">Add drill-through fields here</text>

<!-- data -->
<text x="888" y="121" font-size="9.500" font-weight="bold" fill="#252423">Data</text>
<path d="M987 113l3.500 4-3.500 4M991 113l3.500 4-3.500 4" fill="none" stroke="#222"/>
<rect x="886" y="134.500" width="111" height="15" rx="2" fill="#fff" stroke="#bdbbb9"/>
<circle cx="897" cy="141" r="3" fill="none" stroke="#333"/><path d="M899 143.500l2.500 2.500" stroke="#333"/>
<text x="907.500" y="145.500" font-size="8" fill="#444">Search</text>
<rect x="992.500" y="155" width="4.500" height="310" fill="#8c8c8c"/>
<g class="ch" stroke="#444">
<path d="M892 160.500l3 3 3-3M892 380l3 3 3-3M892 458l3 3 3-3M892 505l3 3 3-3"/>
<path d="M894 254l3 3-3 3M894 269.500l3 3-3 3M894 285l3 3-3 3M894 301l3 3-3 3M894 316.500l3 3-3 3M894 332l3 3-3 3M894 348l3 3-3 3M894 363.500l3 3-3 3M904 394l3 3-3 3"/>
</g>
<use href="#mt" x="902" y="159"/>
<g><use href="#tbl" x="902" y="253"/><use href="#tbl" x="902" y="268"/><use href="#tbl" x="902" y="284"/><use href="#tbl" x="902" y="300"/><use href="#tbl" x="902" y="315"/><use href="#tbl" x="902" y="331"/><use href="#tbl" x="902" y="346"/><use href="#tbl" x="902" y="362"/><use href="#mt" x="902" y="378"/><use href="#tbl" x="902" y="456"/><use href="#tbl" x="902" y="503"/></g>
<g><use href="#cb" x="912" y="175.500"/><use href="#cb" x="912" y="190.500"/><use href="#cb" x="912" y="206.500"/><use href="#cb" x="912" y="222"/><use href="#cb" x="912" y="237.500"/><use href="#cb" x="912" y="393.500"/><use href="#cb" x="912" y="409.500"/><use href="#cb" x="912" y="424.500"/><use href="#cb" x="912" y="440.500"/><use href="#cb" x="912" y="471.500"/><use href="#cb" x="912" y="487.500"/></g>
<use href="#sig" x="925" y="175.500"/><use href="#sig" x="925" y="409.500"/><use href="#sig" x="925" y="440.500"/>
<use href="#calc" x="925" y="190"/><use href="#calc" x="925" y="206"/><use href="#calc" x="925" y="222"/><use href="#calc" x="925" y="237"/>
<rect x="925.500" y="393.500" width="7" height="7" rx="1" fill="none" stroke="#333" stroke-width=".8"/><path d="M925.500 396h7" stroke="#333" stroke-width=".8"/>
<g class="d">
<text x="913.500" y="166">_Measures</text>
<text x="937" y="182">Column</text><text x="937" y="197.500">Current_year</text><text x="937" y="213">Growth</text><text x="937" y="228.500" textLength="54" lengthAdjust="spacingAndGlyphs">Total_Sales_Cu...</text><text x="937" y="244" textLength="54" lengthAdjust="spacingAndGlyphs">Total_Sales_La...</text>
<text x="913.500" y="260">blinkit_customer_fee...</text><text x="913.500" y="275.500">blinkit_customers</text><text x="913.500" y="291">blinkit_delivery_perf...</text><text x="913.500" y="307">blinkit_inventory</text><text x="913.500" y="322">blinkit_marketing_pe...</text><text x="913.500" y="338">blinkit_order_items</text><text x="913.500" y="353.500">blinkit_orders</text><text x="913.500" y="369">blinkit_products</text>
<text x="913.500" y="385">Calender_Table</text><text x="936.500" y="400">Date</text><text x="936.500" y="416">Month</text><text x="936.500" y="431.500">Month Name</text><text x="936.500" y="447">Year</text>
<text x="913.500" y="463">Category_Icons</text><text x="936.500" y="478">category</text><text x="936.500" y="494">Img</text><text x="913.500" y="510">Rating Icons</text>
</g>

<!-- page tabs -->
<rect x="27" y="490" width="738" height="25" fill="#fff"/>
<rect x="27" y="492" width="82.500" height="23" fill="#f3f2f1"/>
<path d="M109.500 492v23M172.500 492v23M231.500 492v23" stroke="#cfcdcb"/>
<path d="M27 514.500h738" stroke="#d6d4d2"/>
<rect x="36" y="497" width="11" height="7.500" fill="none" stroke="#333" stroke-width=".9"/><path d="M38 506.500h7" stroke="#333"/><rect x="33.500" y="510" width="15" height="1" fill="#117865"/>
<rect x="65" y="495" width="8" height="13" rx="1.500" fill="none" stroke="#555" stroke-width=".9"/>
<path d="M90 501l-2.500 2 2.500 2z" fill="#b0b0b0"/><path d="M102 501l2.500 2-2.500 2z" fill="#b0b0b0"/>
<text x="141" y="507" font-size="7.700" fill="#333" text-anchor="middle">Main Page</text>
<text x="202" y="507" font-size="7.700" fill="#333" text-anchor="middle">over view</text>
<text x="285" y="507" font-size="8" fill="#222" stroke="#222" stroke-width=".12" text-anchor="middle">Duplicate of over view</text>
<rect x="232" y="513" width="105.500" height="2" fill="#10735f"/>
<rect x="337.500" y="492" width="25.500" height="23" fill="#10735f"/>
<path d="M350 499.500v8M346 503.500h8" stroke="#fff" stroke-width="1.600"/>

<!-- status -->
<rect y="515" width="1000" height="15" fill="#f3f2f1"/>
<path d="M0 515h1000" stroke="#dedcda"/>
<text x="3" y="526" font-size="7.600" fill="#444">Page 3 of 3</text>
<path d="M862.500 523h3M868 523h61M935 523h8M939 519v8" stroke="#555" stroke-width=".8"/>
<rect x="889" y="518.500" width="2" height="9" fill="#444"/><path d="M900.500 521v4" stroke="#555"/>
<text x="951" y="526" font-size="7" fill="#555">73%</text>
<rect x="978.500" y="518.500" width="9" height="9" fill="none" stroke="#666"/>

<!-- taskbar -->
<rect y="530" width="1000" height="32" fill="url(#tb)"/>
<rect x="401" y="533" width="27" height="26" rx="3" fill="#3a362c"/>
<g fill="#27a9e8"><rect x="349" y="539" width="7.300" height="7.300" fill="#2fc1f5"/><rect x="357.200" y="539" width="7.300" height="7.300" fill="#5ed4fa"/><rect x="349" y="547" width="7.300" height="7.300"/><rect x="357.200" y="547" width="7.300" height="7.300" fill="#38b4ef"/></g>
<rect x="378" y="542" width="12" height="12" rx="2" fill="#5f5f5f"/><rect x="384" y="539" width="11" height="11" rx="1" fill="#fff"/><rect x="381" y="543" width="10" height="8" fill="#aaa" opacity=".7"/>
<rect x="409" y="547" width="4" height="8" fill="#e8a814"/><rect x="413.500" y="543" width="4" height="12" fill="#f2c811"/><rect x="418" y="538" width="4" height="17" fill="#f7d84a"/>
<rect x="409" y="557" width="11" height="2" rx="1" fill="#5ecbf3"/>
<circle cx="442" cy="547" r="7" fill="none" stroke="#25d366" stroke-width="2"/><path d="M439 544c0 3 3 6 6 6" fill="none" stroke="#25d366" stroke-width="1.500"/><circle cx="449" cy="540" r="4.500" fill="#7cc4e8"/><text x="449" y="542.500" font-size="6" fill="#111" text-anchor="middle">7</text>
<circle cx="472" cy="547" r="7.500" fill="#e33b2e"/><path d="M472 547l6.500-3.500a7.500 7.500 0 0 1-6 11z" fill="#f6c22d"/><path d="M472 547l-1 7.500a7.500 7.500 0 0 1-6-11z" fill="#2da94f"/><circle cx="472" cy="547" r="3" fill="#3b82f0" stroke="#fff"/><path d="M474 538l5 0 1 3-5 2z" fill="#2a2a2a"/>
<path d="M505 539l-9 8-3-2.500-1.500 1 3 2.500-3 2.500 1.500 1 3-2.500 9 8z" fill="#1e9ce8"/><path d="M505 539v16l-5-3v-10z" fill="#0a6fc4"/>
<rect x="526" y="540" width="11" height="14" rx="1" fill="#1f8b4e"/><rect x="521.500" y="543" width="8" height="8" fill="#107c41"/><text x="525.500" y="549.500" font-size="6" fill="#fff" font-weight="bold" text-anchor="middle">x</text>
<rect x="551" y="539" width="13" height="16" fill="#f4f4f4"/><rect x="553" y="547" width="3" height="3" fill="#222"/><rect x="557" y="547" width="3" height="3" fill="#cc3333"/><path d="M560 537l4 0 1 4-5 0z" fill="#2a2a2a"/>
<path d="M580 539c4 3 8 3 12 0v4c-2 2-4 3-6 3-2 0-4-1-6-3z" fill="#1e8fe8"/><path d="M580 555c4-3 8-3 12 0v-4c-2-2-4-3-6-3-2 0-4 1-6 3z" fill="#2fb2f5"/><path d="M583 542c2 2 4 2 6 0" stroke="#0b2b4a" fill="none"/>
<circle cx="615.500" cy="547" r="7.500" fill="#e33b2e"/><path d="M615.500 547l6.500-3.500a7.500 7.500 0 0 1-6 11z" fill="#f6c22d"/><path d="M615.500 547l-1 7.500a7.500 7.500 0 0 1-6-11z" fill="#2da94f"/><circle cx="615.500" cy="547" r="3" fill="#3b82f0" stroke="#fff"/><circle cx="620" cy="541.500" r="2.500" fill="#e8883a"/>
<path d="M636 540h5l2 2h8v14h-15z" fill="#f5c33b"/><rect x="636" y="545" width="15" height="11" fill="#fad66d"/><rect x="640" y="550" width="7" height="3" fill="#2a8fe0"/>
<g fill="#bdbdbd"><rect x="441" y="557.500" width="3.500" height="1.500"/><rect x="470" y="557.500" width="3.500" height="1.500"/><rect x="556" y="557.500" width="3.500" height="1.500"/><rect x="641" y="557.500" width="3.500" height="1.500"/></g>
<path d="M789 548l3-3 3 3" fill="none" stroke="#fff" stroke-width="1.200"/>
<circle cx="813" cy="546" r="3.500" fill="none" stroke="#ddd"/><circle cx="815" cy="549" r="1.800" fill="#d13438"/>
<path d="M829 549a2.500 2.500 0 0 1 1-5c1-2 4-2 5 0 2 0 3 1 3 2.500 0 1.500-1 2.500-2 2.500z" fill="#ddd"/>
<path d="M851 546a4.500 4.500 0 0 1 7-2M858 546a4 4 0 0 1-1 3M851 546v5" fill="none" stroke="#ddd"/><circle cx="856" cy="550" r="2.300" fill="#e8983a"/>
<text x="880" y="549.500" font-size="7" fill="#eee" text-anchor="middle">ENG</text>
<path d="M899 544c3-3 7-3 10 0M901 546.500c2-2 4-2 6 0M903 549c1-1 1-1 2 0" fill="none" stroke="#eee"/>
<path d="M915 544h2l3-2v9l-3-2h-2zM922 544c1 1 1 4 0 5M924 543c2 2 2 5 0 7" fill="none" stroke="#eee" stroke-width=".8"/>
<rect x="930" y="543" width="9" height="7" rx="1.500" fill="none" stroke="#eee"/><rect x="939.500" y="545" width="1" height="3" fill="#eee"/>
<text x="973" y="544" font-size="7.300" fill="#f3f3f3" text-anchor="middle">6:19 PM</text>
<text x="973" y="555" font-size="7.300" fill="#f3f3f3" text-anchor="middle">10/5/2025</text>
</svg>
</body></html>
